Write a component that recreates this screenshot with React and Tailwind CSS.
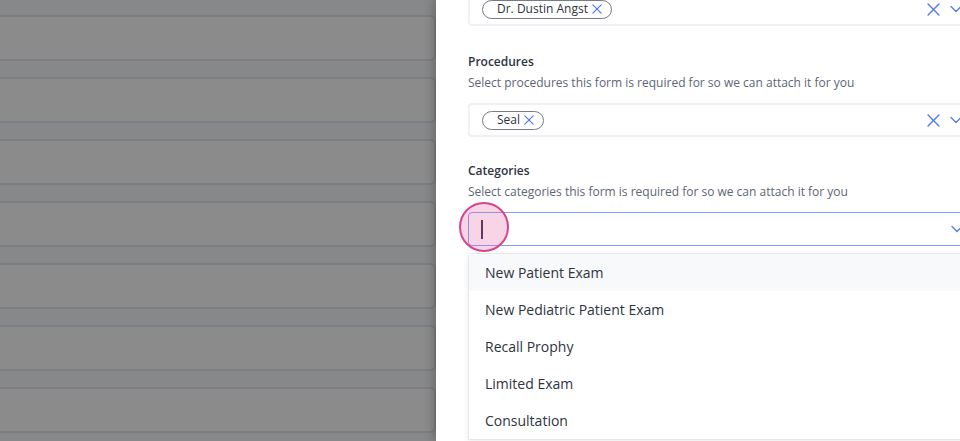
import React from "react";

const font = { fontFamily: '"Open Sans", "Noto Sans", sans-serif' };

function XIcon({ className }) {
  return (
    <svg viewBox="0 0 12 12" className={className} fill="none" stroke="currentColor" strokeWidth="1.4" strokeLinecap="round">
      <line x1="1" y1="1" x2="11" y2="11" />
      <line x1="11" y1="1" x2="1" y2="11" />
    </svg>
  );
}

function Chevron({ className }) {
  return (
    <svg viewBox="0 0 12 12" className={className} fill="none" stroke="currentColor" strokeWidth="1.4" strokeLinecap="round" strokeLinejoin="round">
      <polyline points="1,3.5 6,8.5 11,3.5" />
    </svg>
  );
}

function Chip({ label }) {
  return (
    <div className="flex h-[19px] items-center gap-[4px] rounded-full border-[1.5px] border-[#767b84] pl-[14px] pr-[9px] text-[12px] text-[#2d3441]">
      <span>{label}</span>
      <XIcon className="h-[10px] w-[10px] text-[#4f78ef]" />
    </div>
  );
}

function MultiBox({ chip, className = "" }) {
  return (
    <div className={`flex h-[34px] w-[510px] items-center justify-between rounded-[4px] border-2 border-[#eff1f5] pl-[12px] pr-[14px] ${className}`}>
      <Chip label={chip} />
      <div className="flex items-center gap-[10px] text-[#5a7ef0]">
        <XIcon className="h-[13px] w-[13px]" />
        <Chevron className="h-[12px] w-[12px]" />
      </div>
    </div>
  );
}

function Field({ title, desc, className = "" }) {
  return (
    <div className={className}>
      <div className="text-[12px] font-semibold leading-4 text-[#2d3441]">{title}</div>
      <div className="mt-[5px] text-[12px] leading-4 text-[#5d6675]">{desc}</div>
    </div>
  );
}

const items = [
  "New Patient Exam",
  "New Pediatric Patient Exam",
  "Recall Prophy",
  "Limited Exam",
  "Consultation",
];

export default function App() {
  return (
    <div className="flex h-[441px] w-[960px] overflow-hidden bg-white" style={font}>
      <div className="flex w-[436px] shrink-0 flex-col gap-[16px] bg-[#87888a] pt-[15px]">
        {[0, 1, 2, 3, 4, 5, 6].map((i) => (
          <div
            key={i}
            className="ml-[-10px] h-[46px] w-[446px] shrink-0 rounded-[5px] border-2 border-[#7d7e82] bg-[#8b8b8b]"
          />
        ))}
      </div>
      <div className="relative z-10 w-[524px] shrink-0 overflow-hidden bg-white pl-[32px] shadow-[-4px_0_8px_rgba(0,0,0,0.18)]">
        <MultiBox chip="Dr. Dustin Angst" className="mt-[-8px]" />
        <Field
          className="mt-[28px]"
          title="Procedures"
          desc="Select procedures this form is required for so we can attach it for you"
        />
        <MultiBox chip="Seal" className="mt-[12px]" />
        <Field
          className="mt-[26px]"
          title="Categories"
          desc="Select categories this form is required for so we can attach it for you"
        />
        <div className="relative mt-[12px] flex h-[34px] w-[510px] items-center justify-between rounded-[4px] border-[1.5px] border-[#829ff3] pl-[12px] pr-[14px]">
          <div className="h-[19px] w-[1.5px] bg-[#3a2c45]" />
          <Chevron className="h-[12px] w-[12px] text-[#5a7ef0]" />
          <div className="absolute left-[-10px] top-[-11px] h-[50px] w-[50px] rounded-full border-2 border-[#d6448e] bg-[#e0569c]/25" />
        </div>
        <div className="mt-[7px] w-[510px] rounded-t-[4px] border border-[#e6e8ec] bg-white shadow-[0_2px_6px_rgba(0,0,0,0.08)]">
          {items.map((t, i) => (
            <div
              key={t}
              className={`flex h-[37px] items-center px-[16px] text-[14px] text-[#2d3441] ${i === 0 ? "bg-[#f8f9fb]" : ""}`}
            >
              {t}
            </div>
          ))}
        </div>
      </div>
    </div>
  );
}
